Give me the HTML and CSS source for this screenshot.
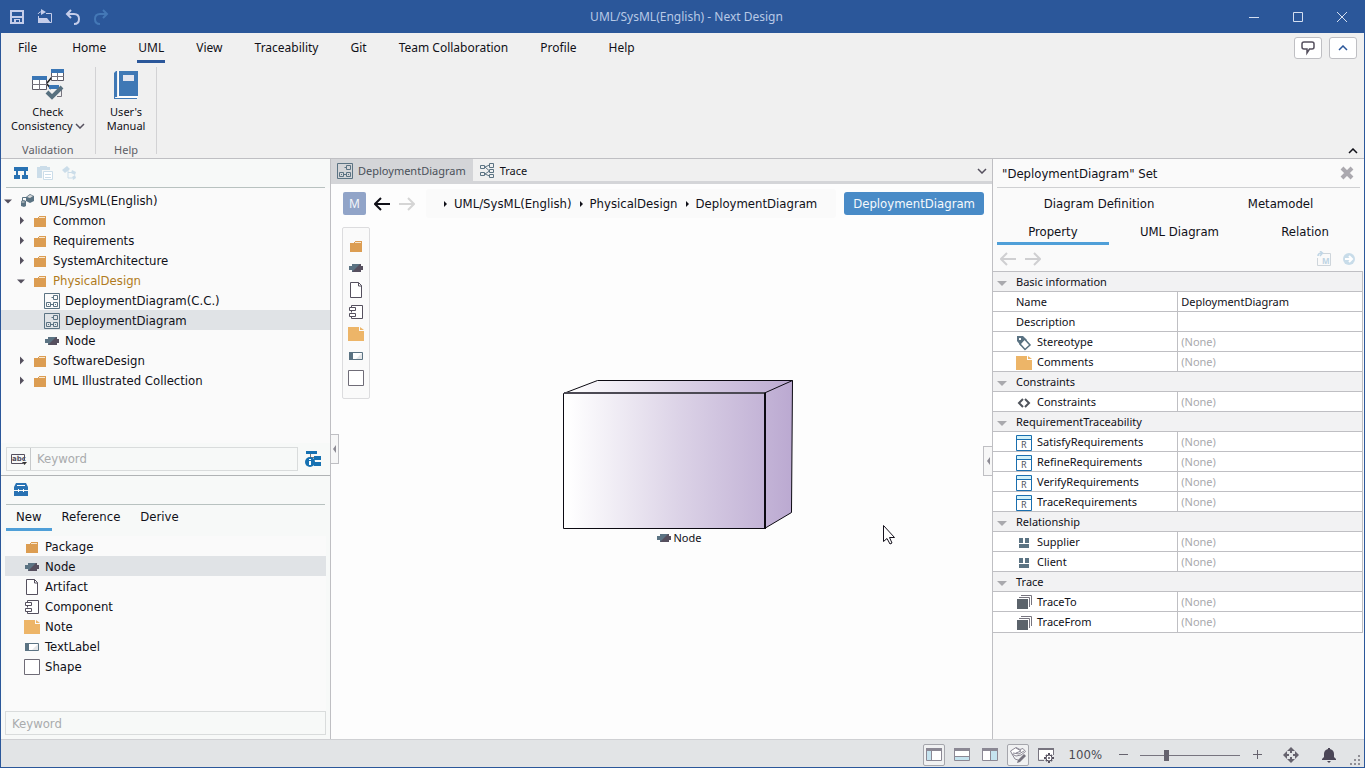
FILE: index.html
```
<!DOCTYPE html>
<html lang="en">

<head>
    <meta charset="UTF-8">
    <meta name="viewport" content="width=device-width, initial-scale=1.0">
    <title>UML/SysML(English) - Next Design</title>
    <link rel="stylesheet" href="styles.css">
</head>

<body>
    <!-- shared icons -->
    <svg class="sprite" aria-hidden="true">
        <symbol id="folder" viewBox="0 0 16 16">
            <path fill="#dc9d52" d="M2 5h12v9H2zM7 3h7v1H7zM13 3h1v3h-1zM6 4h1v1H6z" />
            <path fill="#f8e6cf" d="M7 4h6v1H7z" />
        </symbol>
        <symbol id="node" viewBox="0 0 16 16">
            <path fill="#5b7383" d="M1 6h3V4h9l-8 8H4v-2H1z" />
            <path fill="#564f5e" d="M12 4h1v2h2v4h-2v2H4z" />
        </symbol>
        <symbol id="file" viewBox="0 0 16 16">
            <path fill="#fff" stroke="#55505e" d="M2.500.5h8l3 3v12h-11z" />
            <path fill="none" stroke="#55505e" d="M10.500.5v3.500h3.500" />
        </symbol>
        <symbol id="component" viewBox="0 0 16 16">
            <path fill="#fff" stroke="#55505e" d="M3.500 3V1.500h11v13h-11V13M3.500 6.500v2" />
            <path fill="#fff" stroke="#55505e" d="M1.500 3.500h6v3h-6zM1.500 9.500h6v3h-6z" />
        </symbol>
        <symbol id="note" viewBox="0 0 16 16">
            <path fill="#edb568" d="M0 1h11v4h5v10H0zM12 1l4 3h-4z" />
        </symbol>
        <symbol id="label" viewBox="0 0 16 16">
            <path fill="#fff" stroke="#5b7383" d="M1.500 4.500h13v7h-13z" />
            <path fill="#5b7383" d="M1 4h4v8H1z" />
            <path fill="#e4e6e8" d="M14 5v6H8z" />
        </symbol>
        <symbol id="shape" viewBox="0 0 16 16">
            <path fill="#fff" stroke="#6f6c77" d="M.5.5h15v15H.5z" />
        </symbol>
        <symbol id="diagram" viewBox="0 0 16 16">
            <path fill="none" stroke="#5b7383" d="M.5.5h15v15H.5zM9.500 2.500h4v4h-4zM2.500 9.500h4v4h-4zM9.500 9.500h4v4h-4zM6.500 11.500h3M7.500 4.500h2" />
            <path fill="#5b7383" d="M4 11h1v1H4zM11 11h1v1h-1z" />
        </symbol>
        <symbol id="requirement" viewBox="0 0 16 16">
            <path fill="#fff" stroke="#1a6faf" d="M.5.5h15v15H.5z" />
            <path fill="#d3f1f8" d="M1 1h14v3H1z" />
            <path stroke="#1a6faf" d="M0 4.500h16" />
            <text x="5" y="13" font-family="Noto Sans, sans-serif" font-size="9" fill="#4f535b">R</text>
        </symbol>
        <symbol id="relation" viewBox="0 0 16 16">
            <path fill="#5b7383" d="M3 3h4v5H3zM9 3h4v5H9zM3 9h10v4H3z" />
        </symbol>
        <symbol id="stack" viewBox="0 0 16 16">
            <path fill="#5b636b" d="M1 4h11v10H1z" />
            <path fill="none" stroke="#77757f" d="M3 2.500h10.500V12M5 .5h10.500V10" />
        </symbol>
        <symbol id="left" viewBox="0 0 16 14">
            <path fill="none" stroke="currentColor" stroke-width="2" d="M16 7H1M7 1L1 7l6 6" />
        </symbol>
        <symbol id="right" viewBox="0 0 16 14">
            <path fill="none" stroke="currentColor" stroke-width="2" d="M0 7h15M9 1l6 6-6 6" />
        </symbol>
        <symbol id="up" viewBox="0 0 10 6">
            <path fill="none" stroke="currentColor" stroke-width="1.500" d="M1 5l4-4 4 4" />
        </symbol>
        <symbol id="down" viewBox="0 0 10 6">
            <path fill="none" stroke="currentColor" stroke-width="1.500" d="M1 1l4 4 4-4" />
        </symbol>
    </svg>

    <header class="titlebar">
        <div class="quick">
            <button aria-label="Save"><svg class="icon" viewBox="0 0 16 16"><path fill="none" stroke="#c5cdea" stroke-width="2" d="M2 2h12v12H2z" /><path fill="#c5cdea" d="M3 7h10v2H3zM5 11h2v3H5zM10 11h1v3h-1zM5 10h6v1H5z" /></svg></button>
            <button aria-label="Open"><svg class="icon" viewBox="0 0 16 16"><path fill="none" stroke="#c5cdea" d="M9 4.500h5.500v9h-13V7M1 5c1-2 3-2.500 6-2.500" stroke-width="1" /><path fill="#c5cdea" d="M4 0l5 3-5 3zM1 9h9l4 5H1z" /></svg></button>
            <button aria-label="Undo"><svg class="icon" viewBox="0 0 16 16"><path fill="none" stroke="#c5cdea" stroke-width="2" d="M6 1L2 5l4 4M2 5h7q5 0 5 5t-5 5" /></svg></button>
            <button aria-label="Redo"><svg class="icon" viewBox="0 0 16 16"><path fill="none" stroke="#4478b6" stroke-width="2" d="M10 1l4 4-4 4M14 5H7q-5 0-5 5t5 5" /></svg></button>
        </div>
        <h1>UML/SysML(English) - Next Design</h1>
        <div class="window-buttons">
            <button aria-label="Minimize"><svg viewBox="0 0 12 12"><path d="M1 6.500h10" /></svg></button>
            <button aria-label="Maximize"><svg viewBox="0 0 12 12"><path d="M1.500 1.500h9v9h-9z" /></svg></button>
            <button aria-label="Close"><svg viewBox="0 0 12 12"><path d="M1 1l10 10M11 1L1 11" /></svg></button>
        </div>
    </header>

    <div class="ribbon">
        <div class="ribbon-top">
            <nav class="ribbon-tabs">
                <button class="file">File</button>
                <button>Home</button>
                <button class="active">UML</button>
                <button>View</button>
                <button>Traceability</button>
                <button>Git</button>
                <button>Team Collaboration</button>
                <button>Profile</button>
                <button>Help</button>
            </nav>
            <div class="ribbon-extra">
                <button aria-label="Feedback"><svg class="icon" viewBox="0 0 16 16"><path fill="none" stroke="#55505e" stroke-width="1.500" d="M4 2h8q2 0 2 2v3q0 2-2 2H9.500L7 13V9H4Q2 9 2 7V4q0-2 2-2z" /></svg></button>
                <button aria-label="Collapse"><svg class="chevron blue"><use href="#up" /></svg></button>
            </div>
        </div>
        <div class="ribbon-groups">
            <section class="group">
                <button>
                    <svg class="big-icon" viewBox="0 0 32 32">
                        <path stroke="#222" stroke-width="1.500" d="M15 14l5-6M15 15l4 5" />
                        <path fill="#fff" stroke="#5d5a66" d="M.5 7.500h14v13H.5zM19.500.5h12v11h-12z" />
                        <path fill="#3a76b5" d="M0 7h15v4H0zM19 0h13v4H19zM17 16h10v4H17z" />
                        <path fill="none" stroke="#77757f" d="M0 15.500h15M7.500 11v10M19 7.500h13M25.500 4v8M29.500 21v6.500H25" />
                        <path fill="none" stroke="#57707f" stroke-width="4" d="M15 23l5 5 10-10" />
                    </svg>
                    <span>Check</span>
                    <span>Consistency<svg class="chevron small"><use href="#down" /></svg></span>
                </button>
                <h2>Validation</h2>
            </section>
            <section class="group">
                <button>
                    <svg class="big-icon" viewBox="0 0 32 32">
                        <path fill="#3f78b5" d="M4 4l2-2h1v26H5v2H4zM9 2h19v25H9zM5 29h22v1H5z" />
                        <path fill="#e3e5ef" d="M13 6h11v6H13z" />
                        <path fill="#fff" d="M8 2h1v25h19v1l-1 1H6v-1h2z" />
                    </svg>
                    <span>User's</span>
                    <span>Manual</span>
                </button>
                <h2>Help</h2>
            </section>
            <button class="minimize" aria-label="Minimize ribbon"><svg class="chevron"><use href="#up" /></svg></button>
        </div>
    </div>

    <main>
        <aside class="navigator">
            <div class="tools">
                <button aria-label="Model"><svg class="icon" viewBox="0 0 16 16"><path fill="#2872b3" d="M1 2h14v4H1zM1 10h6v4H1zM9 10h6v4H9zM3 6h2v4H3zM11 6h2v4h-2z" /></svg></button>
                <button aria-label="Documents"><svg class="icon" viewBox="0 0 16 16"><path fill="#cbdde9" d="M0 2h3V1h7v1h3v3H5v8H0z" /><path fill="#fff" stroke="#cbdde9" d="M6.500 6.500h9v8h-9zM8 9.500h6M8 12.500h6" /></svg></button>
                <button aria-label="Relations"><svg class="icon" viewBox="0 0 16 16"><path fill="#cbdde9" d="M1 5l5-4 3 3-5 4zM11 5l4 2-1 3-4-2zM11 12l3-2 1 3-3 2z" /><path fill="none" stroke="#cbdde9" d="M7 5v8h4M7 7.500h4" /></svg></button>
            </div>
            <ul class="tree">
                <li class="root"><span class="arrow open"></span><svg class="icon" viewBox="0 0 16 16"><path fill="#5b7383" d="M7 4l4-3 4 2v5l-4 2-4-2zM2 8l3-1 2 1v5l-2 1-3-1z" /><path fill="#ddd" d="M8 4l3-2 3 1-3 2zM2.500 8.500h3v1h-3z" /><path fill="none" stroke="#5b7383" d="M3.500 8V4.500H7" /></svg>UML/SysML(English)</li>
                <li><span class="arrow"></span><svg class="icon"><use href="#folder" /></svg>Common</li>
                <li><span class="arrow"></span><svg class="icon"><use href="#folder" /></svg>Requirements</li>
                <li><span class="arrow"></span><svg class="icon"><use href="#folder" /></svg>SystemArchitecture</li>
                <li class="current"><span class="arrow open"></span><svg class="icon"><use href="#folder" /></svg>PhysicalDesign</li>
                <li class="leaf"><svg class="icon"><use href="#diagram" /></svg>DeploymentDiagram(C.C.)</li>
                <li class="leaf selected"><svg class="icon"><use href="#diagram" /></svg>DeploymentDiagram</li>
                <li class="leaf"><svg class="icon"><use href="#node" /></svg>Node</li>
                <li><span class="arrow"></span><svg class="icon"><use href="#folder" /></svg>SoftwareDesign</li>
                <li><span class="arrow"></span><svg class="icon"><use href="#folder" /></svg>UML Illustrated Collection</li>
            </ul>
            <div class="search-row">
                <div class="search">
                    <button aria-label="Search by name"><svg class="icon" viewBox="0 0 16 16"><path fill="none" stroke="#55505e" d="M13.500 9V3.500H.5v9H12" /><text x="1" y="10" font-family="DejaVu Sans, sans-serif" font-size="7" font-weight="bold" fill="#55505e">abc</text><path fill="#333" d="M11 11h5l-2.500 3z" /></svg></button>
                    <input type="text" placeholder="Keyword" aria-label="Search model">
                </div>
                <button aria-label="Search details"><svg class="icon" viewBox="0 0 16 16"><path fill="#1671b2" d="M1 0h11v3H1zM9 5h7v4H9zM9 11h7v4H9z" /><path fill="none" stroke="#777" d="M5.500 3v3M5 6.500h4" /><circle cx="5" cy="11" r="5" fill="#1671b2" /><path fill="#fff" d="M4 8h2v1H4zM4 10h2v4H4z" /></svg></button>
            </div>

            <section class="toolbox">
                <div class="tools">
                    <button aria-label="Toolbox"><svg class="icon" viewBox="0 0 16 16"><path fill="#2872b3" d="M3 1h10l2 4v3H1V5zM1 9h14v5H1z" /><path fill="none" stroke="#fff" d="M4 3.500h8M5.500 7v3M10.500 7v3" /></svg></button>
                </div>
                <div class="toolbox-tabs">
                    <button class="active">New</button>
                    <button>Reference</button>
                    <button>Derive</button>
                </div>
                <ul class="types">
                    <li><svg class="icon"><use href="#folder" /></svg>Package</li>
                    <li class="selected"><svg class="icon"><use href="#node" /></svg>Node</li>
                    <li><svg class="icon"><use href="#file" /></svg>Artifact</li>
                    <li><svg class="icon"><use href="#component" /></svg>Component</li>
                    <li><svg class="icon"><use href="#note" /></svg>Note</li>
                    <li><svg class="icon"><use href="#label" /></svg>TextLabel</li>
                    <li><svg class="icon"><use href="#shape" /></svg>Shape</li>
                </ul>
                <input type="text" placeholder="Keyword" aria-label="Search types">
            </section>
        </aside>

        <section class="editor">
            <div class="editor-tabs">
                <button class="active"><svg class="icon"><use href="#diagram" /></svg>DeploymentDiagram</button>
                <button><svg class="icon" viewBox="0 0 16 16"><path fill="none" stroke="#5b7383" d="M1.500 2.500h4v3h-4zM1.500 9.500h4v3h-4zM10.500.5h4v4h-4zM10.500 6.500h4v3h-4zM10.500 11.500h4v3h-4zM6 4l4.500-2M6 4l4.500 4M6 11l4.500-3M6 11l4.500 2" /></svg>Trace</button>
                <button class="more" aria-label="More tabs"><svg class="chevron small"><use href="#down" /></svg></button>
            </div>
            <div class="path-row">
                <span class="model">M</span>
                <button aria-label="Back"><svg class="nav-arrow"><use href="#left" /></svg></button>
                <button class="off" aria-label="Forward"><svg class="nav-arrow"><use href="#right" /></svg></button>
                <nav class="path">
                    <a href="#">UML/SysML(English)</a>
                    <a href="#">PhysicalDesign</a>
                    <a href="#">DeploymentDiagram</a>
                </nav>
                <button class="view-name">DeploymentDiagram</button>
            </div>
            <div class="canvas">
                <div class="palette">
                    <button aria-label="Package"><svg class="icon"><use href="#folder" /></svg></button>
                    <button aria-label="Node"><svg class="icon"><use href="#node" /></svg></button>
                    <button aria-label="Artifact"><svg class="icon"><use href="#file" /></svg></button>
                    <button aria-label="Component"><svg class="icon"><use href="#component" /></svg></button>
                    <button aria-label="Note"><svg class="icon"><use href="#note" /></svg></button>
                    <button aria-label="TextLabel"><svg class="icon"><use href="#label" /></svg></button>
                    <button aria-label="Shape"><svg class="icon"><use href="#shape" /></svg></button>
                </div>
                <figure class="node">
                    <svg viewBox="0 0 231 150">
                        <defs>
                            <linearGradient id="face" gradientUnits="userSpaceOnUse" x1="0" y1="0" x2="230" y2="0">
                                <stop offset="0.020" stop-color="#fff" />
                                <stop offset="0.200" stop-color="#f2eff6" />
                                <stop offset="0.500" stop-color="#dcd3e7" />
                                <stop offset="1" stop-color="#bba9d1" />
                            </linearGradient>
                        </defs>
                        <path fill="url(#face)" stroke="#0c0a12" d="M.5 13.500L34.500.5h195l-1 132-27 16H.5z" />
                        <path fill="none" stroke="#4c4a54" stroke-width="2" d="M1 13h201" />
                        <path fill="none" stroke="#0c0a12" d="M201.500 13L229.500.5" />
                        <path stroke="#0c0a12" stroke-width="2" d="M202 13v136" />
                    </svg>
                    <figcaption><svg class="icon"><use href="#node" /></svg>Node</figcaption>
                </figure>
                <svg class="cursor" viewBox="0 0 12 20"><path fill="#fff" stroke="#14111c" d="M.5.5v16l3.500-3 3 5.500 2-1-2.500-5.500h5z" /></svg>
            </div>
            <button class="handle handle-left" aria-label="Hide navigator"></button>
            <button class="handle handle-right" aria-label="Hide inspector"></button>
        </section>

        <aside class="inspector">
            <div class="inspector-title">
                <h2>"DeploymentDiagram" Set</h2>
                <button aria-label="Close"><svg class="icon" viewBox="0 0 16 16"><path stroke="#aba9af" stroke-width="4" d="M3 3l10 10M13 3L3 13" /></svg></button>
            </div>
            <div class="inspector-tabs">
                <button>Diagram Definition</button>
                <button>Metamodel</button>
            </div>
            <div class="inspector-tabs">
                <button class="active">Property</button>
                <button>UML Diagram</button>
                <button>Relation</button>
            </div>
            <div class="inspector-nav">
                <button aria-label="Back"><svg class="nav-arrow"><use href="#left" /></svg></button>
                <button aria-label="Forward"><svg class="nav-arrow"><use href="#right" /></svg></button>
                <button class="open-model" aria-label="Open metamodel"><svg class="icon" viewBox="0 0 16 16"><path fill="none" stroke="#ced5db" d="M7 2.500h7.500v12h-13V7" /><path fill="none" stroke="#c0d6e6" stroke-width="1.500" d="M2 5q0-3 4-3M4 0l2.500 2L4 5" /><text x="6" y="13" font-family="Noto Sans, sans-serif" font-size="8" font-weight="bold" fill="#bdd3e3">M</text></svg></button>
                <button aria-label="Go"><svg class="icon" viewBox="0 0 16 16"><circle cx="8" cy="8" r="6" fill="#c8dce9" /><path fill="none" stroke="#fff" stroke-width="2" d="M4 8h7M8 5l3 3-3 3" /></svg></button>
            </div>
            <table class="properties">
                <tr class="section"><th colspan="2"><span class="toggle"></span>Basic information</th></tr>
                <tr><th>Name</th><td class="value">DeploymentDiagram</td></tr>
                <tr><th>Description</th><td></td></tr>
                <tr><th><svg class="icon" viewBox="0 0 16 16"><path fill="#5b7383" d="M1 1h6l4 4-6 6-4-5z" /><path fill="#fff" stroke="#57707f" stroke-width="1.500" d="M8.500 4l5.500 6-5 4.500-5-5.500z" /><path fill="#fff" d="M3 3h2v2H3z" /></svg>Stereotype</th><td>(None)</td></tr>
                <tr><th><svg class="icon"><use href="#note" /></svg>Comments</th><td>(None)</td></tr>
                <tr class="section"><th colspan="2"><span class="toggle"></span>Constraints</th></tr>
                <tr><th><svg class="icon" viewBox="0 0 16 16"><path fill="none" stroke="#4f535b" stroke-width="2" d="M7 4L3 8l4 4M9 4l4 4-4 4" /></svg>Constraints</th><td>(None)</td></tr>
                <tr class="section"><th colspan="2"><span class="toggle"></span>RequirementTraceability</th></tr>
                <tr><th><svg class="icon"><use href="#requirement" /></svg>SatisfyRequirements</th><td>(None)</td></tr>
                <tr><th><svg class="icon"><use href="#requirement" /></svg>RefineRequirements</th><td>(None)</td></tr>
                <tr><th><svg class="icon"><use href="#requirement" /></svg>VerifyRequirements</th><td>(None)</td></tr>
                <tr><th><svg class="icon"><use href="#requirement" /></svg>TraceRequirements</th><td>(None)</td></tr>
                <tr class="section"><th colspan="2"><span class="toggle"></span>Relationship</th></tr>
                <tr><th><svg class="icon"><use href="#relation" /></svg>Supplier</th><td>(None)</td></tr>
                <tr><th><svg class="icon"><use href="#relation" /></svg>Client</th><td>(None)</td></tr>
                <tr class="section"><th colspan="2"><span class="toggle"></span>Trace</th></tr>
                <tr><th><svg class="icon"><use href="#stack" /></svg>TraceTo</th><td>(None)</td></tr>
                <tr><th><svg class="icon"><use href="#stack" /></svg>TraceFrom</th><td>(None)</td></tr>
            </table>
        </aside>
    </main>

    <footer class="statusbar">
        <div class="view-buttons">
            <button class="on" aria-label="Navigator"><svg class="icon" viewBox="0 0 16 16"><path fill="#fff" stroke="#8b8894" d="M.5 1.500h15v12H.5z" /><path fill="#c5e3ef" d="M1 4h4v9H1z" /><path fill="#8b8894" d="M0 1h16v3H0zM5 4h1v9H5z" /></svg></button>
            <button aria-label="Bottom pane"><svg class="icon" viewBox="0 0 16 16"><path fill="#fff" stroke="#8b8894" d="M.5 1.500h15v12H.5z" /><path fill="#c5e3ef" d="M1 10h14v3H1z" /><path fill="#8b8894" d="M0 1h16v3H0zM1 9h14v1H1z" /></svg></button>
            <button aria-label="Inspector"><svg class="icon" viewBox="0 0 16 16"><path fill="#fff" stroke="#8b8894" d="M.5 1.500h15v12H.5z" /><path fill="#c5e3ef" d="M8 4h7v9H8z" /><path fill="#8b8894" d="M0 1h16v3H0zM8 4h1v9H8z" /></svg></button>
            <button class="on" aria-label="Edit mode"><svg class="icon" viewBox="0 0 16 16"><path fill="#fff" stroke="#8b8894" d="M.5 4L6 .5l4 2 3-1 2.500 3L11 8l-5 1-4-2zM3 6l6 1 5-3M2 7l3 5 3 1M6 1l5 3-5 2" /><path fill="#77747f" d="M14 7l2 2-6 6-3 1 1-3z" /></svg></button>
            <button aria-label="View settings"><svg class="icon" viewBox="0 0 16 16"><path fill="#fff" d="M1 2h14v10H1z" /><path fill="none" stroke="#77747f" d="M6 13.500H.5v-12h15V8" /><path fill="#77747f" d="M0 1h16v2H0z" /><path stroke="#55505e" stroke-width="2" d="M11 6v10M6 11h10M8 8l6 6M14 8l-6 6" /><circle cx="11" cy="11" r="3" fill="#fff" stroke="#55505e" /><circle cx="11" cy="11" r="1" fill="#55505e" /></svg></button>
        </div>
        <span class="zoom-value">100%</span>
        <button aria-label="Zoom out"><svg class="icon" viewBox="0 0 16 16"><path stroke="#66636e" d="M4 7.500h9" /></svg></button>
        <input type="range" min="0" max="100" value="25" aria-label="Zoom">
        <button aria-label="Zoom in"><svg class="icon" viewBox="0 0 16 16"><path stroke="#66636e" d="M4 7.500h9M8.500 3v9" /></svg></button>
        <button class="fit" aria-label="Fit"><svg class="icon" viewBox="0 0 16 16"><path fill="#66636e" d="M8 0l4 4H9v2H7V4H4zM8 16l4-4H9v-2H7v2H4zM0 8l4-4v3h2v2H4v3zM16 8l-4-4v3h-2v2h2v3z" /></svg></button>
        <button class="bell" aria-label="Notifications"><svg class="icon" viewBox="0 0 16 16"><path fill="#4b4657" d="M7 1h2v1q4 1 4 5v3l2 2v1H1v-1l2-2V7q0-4 4-5zM6 14h4l-2 2z" /></svg></button>
        <svg class="grip" viewBox="0 0 12 12"><path fill="#8f8e95" d="M8 0h2v2H8zM4 4h2v2H4zM8 4h2v2H8zM0 8h2v2H0zM4 8h2v2H4zM8 8h2v2H8z" /></svg>
    </footer>
</body>

</html>
```
FILE: styles.css
```
* {
    box-sizing: border-box;
}

body {
    display: flex;
    flex-direction: column;
    height: 100vh;
    min-height: 700px;
    margin: 0;
    border: 1px solid #2b579a;
    border-top: none;
    background-color: #fdfdfd;
    color: #101018;
    font-family: 'DejaVu Sans Condensed', 'DejaVu Sans', sans-serif;
    font-size: 13px;
    line-height: 20px;
}

button {
    display: flex;
    align-items: center;
    justify-content: center;
    padding: 0;
    border: none;
    background: none;
    color: inherit;
    font: inherit;
    white-space: nowrap;
}

input {
    min-width: 0;
    font: inherit;
}

h1,
h2,
ul,
figure {
    margin: 0;
    padding: 0;
    font-size: inherit;
    font-weight: normal;
    list-style: none;
}

svg {
    display: block;
    flex: none;
}

.sprite {
    display: none;
}

.icon {
    width: 16px;
    height: 16px;
}

.chevron {
    width: 10px;
    height: 6px;
}

.chevron.small {
    color: #55505e;
}

.chevron.blue {
    color: #2b579a;
}

.nav-arrow {
    width: 16px;
    height: 14px;
}

/* title bar */
.titlebar {
    display: flex;
    flex: none;
    align-items: center;
    height: 33px;
    padding-top: 1px;
    background-color: #2b579a;
    color: #b8c9e6;
    font-family: 'Noto Sans', sans-serif;
    font-size: 12px;
}

.quick,
.window-buttons {
    display: flex;
    flex: 1;
}

.quick {
    gap: 12px;
    padding-left: 8px;
}

.window-buttons {
    justify-content: flex-end;
}

.window-buttons button {
    width: 44px;
    height: 32px;
}

.window-buttons svg {
    width: 12px;
    height: 12px;
    fill: none;
    stroke: #d5dff0;
}

/* ribbon */
.ribbon {
    flex: none;
    border-bottom: 1px solid #bfbfc3;
    background-color: #f0f0f0;
    font-family: 'Noto Sans', sans-serif;
    font-size: 12px;
}

.ribbon-top {
    display: flex;
    justify-content: space-between;
    height: 32px;
    padding: 0 7px 0 16px;
}

.ribbon-tabs {
    display: flex;
    gap: 30px;
}

.ribbon-tabs button {
    height: 30px;
    padding: 0 1px;
    border-bottom: 3px solid transparent;
    border-top: 3px solid transparent;
}

.ribbon-tabs .file {
    margin-right: 3px;
}

.ribbon-tabs .active {
    border-bottom-color: #2b579a;
}

.ribbon-extra {
    display: flex;
    gap: 7px;
    padding-top: 4px;
}

.ribbon-extra button {
    width: 28px;
    height: 22px;
    border: 1px solid #bfbfc3;
    border-radius: 3px;
    background-color: #fff;
}

.ribbon-groups {
    display: flex;
    height: 93px;
    padding: 2px 6px 4px 0;
}

.group {
    display: flex;
    flex-direction: column;
    align-items: center;
    justify-content: space-between;
    padding: 2px 10px 0;
    border-right: 1px solid #d2d2d4;
    font-size: 11px;
}

.group + .group {
    padding: 2px 11px 0;
}

.group button {
    flex-direction: column;
    line-height: 14px;
}

.group button span {
    display: flex;
    gap: 2px;
    align-items: center;
}

.group h2 {
    color: #5e5e66;
    line-height: 8px;
}

.big-icon {
    width: 32px;
    height: 32px;
    margin-bottom: 4px;
}

.minimize {
    align-self: flex-end;
    margin-left: auto;
}

/* navigator */
main {
    display: flex;
    flex: 1;
    min-height: 0;
}

.navigator {
    display: flex;
    flex: none;
    flex-direction: column;
    width: 330px;
    border-right: 1px solid #bfbfc3;
    background-color: #f7f9f8;
}

.tools {
    display: flex;
    gap: 8px;
    height: 29px;
    margin: 0 5px;
    padding-left: 7px;
    border-bottom: 1px solid #b8c2c0;
}

.tree {
    flex: 1;
    padding-top: 2px;
    background-color: #fafafa;
}

.tree li {
    display: flex;
    gap: 5px;
    align-items: center;
    height: 20px;
    padding: 1px 0 0 16px;
}

.tree .root {
    padding-left: 3px;
}

.tree .leaf {
    padding-left: 43px;
}

.tree .current {
    color: #b07a20;
}

.tree .selected,
.types .selected {
    background-color: #e0e3e6;
}

.arrow {
    width: 10px;
    height: 10px;
    background-color: #55505e;
    clip-path: polygon(30% 10%, 70% 50%, 30% 90%);
}

.arrow.open {
    clip-path: polygon(0 40%, 80% 40%, 40% 80%);
}

.search-row {
    display: flex;
    gap: 7px;
    padding: 4px 9px 4px 5px;
}

.search {
    display: flex;
    flex: 1;
    height: 24px;
    border: 1px solid #d9dcdc;
}

.search button {
    width: 24px;
    border-right: 1px solid #c7cacb;
}

.search input {
    flex: 1;
    padding: 0 6px;
    border: none;
    background: none;
}

::placeholder {
    color: #a9abad;
}

.toolbox {
    display: flex;
    flex-direction: column;
    height: 264px;
    border-top: 1px solid #b0b3b5;
}

.toolbox-tabs {
    display: flex;
    gap: 18px;
    height: 26px;
    margin: 0 5px 5px;
}

.toolbox-tabs button {
    padding: 0 1px;
    border-bottom: 3px solid transparent;
}

.toolbox-tabs .active {
    padding: 0 10px;
    margin-right: -9px;
    border-bottom-color: #4f9fd8;
}

.types {
    flex: 1;
    margin: 0 4px;
    background-color: #fafafa;
}

.types li {
    display: flex;
    gap: 5px;
    align-items: center;
    height: 20px;
    padding: 1px 0 0 19px;
}

.toolbox input {
    height: 24px;
    margin: 0 4px 4px;
    padding: 0 6px;
    border: 1px solid #d9dcdc;
    background: none;
}

/* editor */
.editor {
    display: flex;
    flex: 1;
    flex-direction: column;
    position: relative;
    min-width: 0;
}

.editor-tabs {
    display: flex;
    height: 25px;
    border-bottom: 3px solid #d4d5d8;
    background-color: #f0f0f0;
    font-family: 'Noto Sans', sans-serif;
    font-size: 11px;
}

.editor-tabs button {
    gap: 5px;
    padding: 2px 6px 0;
}

.editor-tabs .active {
    padding-right: 7px;
    background-color: #d4d5d8;
    color: #4a5058;
}

.editor-tabs .more {
    padding-right: 5px;
    margin-left: auto;
}

.path-row {
    display: flex;
    align-items: center;
    padding: 5px 8px 0 12px;
}

.model {
    width: 23px;
    margin-right: 8px;
    border-radius: 2px;
    background-color: #91a4c8;
    color: #f4f6fa;
    font: 12px/23px 'Noto Sans', sans-serif;
    text-align: center;
}

.path-row .off {
    margin-left: 9px;
    color: #d5d5d5;
}

.path {
    display: flex;
    flex: 1;
    min-width: 0;
    height: 29px;
    margin: 0 8px 0 11px;
    padding-left: 16px;
    border-radius: 3px;
    background-color: #fafafa;
    line-height: 29px;
}

.path a {
    display: flex;
    gap: 7px;
    align-items: center;
    margin-right: 6px;
    color: inherit;
    text-decoration: none;
}

.path a::before {
    content: '';
    border: 3px solid transparent;
    border-right-width: 0;
    border-left-color: #101018;
    margin-left: 2px;
}

.view-name {
    height: 23px;
    padding: 0 9px;
    border-radius: 3px;
    background-color: #498bc7;
    color: #f6f9fc;
}

.canvas {
    position: relative;
    flex: 1;
}

.palette {
    display: flex;
    flex-direction: column;
    gap: 6px;
    width: 28px;
    margin: 9px 11px;
    padding: 10px 0 12px;
    border: 1px solid #dcdcde;
    border-radius: 2px;
    background-color: #fafafa;
}

.node {
    position: absolute;
    top: 162px;
    left: 232px;
    width: 231px;
    font-family: 'Noto Sans', sans-serif;
    font-size: 11px;
}

.node figcaption {
    display: flex;
    gap: 2px;
    justify-content: center;
    align-items: center;
    line-height: 16px;
}

.cursor {
    position: absolute;
    top: 307px;
    left: 552px;
    width: 12px;
    height: 20px;
}

.handle {
    position: absolute;
    top: 275px;
    left: 0;
    width: 8px;
    height: 30px;
    border: 1px solid #bfbfc3;
    border-left: none;
    background-color: #f7f7f7;
}

.handle-right {
    top: 287px;
    right: 0;
    left: auto;
    width: 9px;
    border: 1px solid #bfbfc3;
    border-right: none;
}

.handle::before {
    content: '';
    border: 4px solid transparent;
    border-left-width: 0;
    border-right: 3px solid #8d8b94;
}

/* inspector */
.inspector {
    flex: none;
    width: 372px;
    border-left: 1px solid #bfbfc3;
    background-color: #fafafa;
}

.inspector-title,
.inspector-tabs,
.inspector-nav {
    display: flex;
    margin: 0 4px;
}

.inspector-title {
    justify-content: space-between;
    height: 29px;
    padding: 0 5px;
    border-bottom: 1px solid #cfd0d2;
    line-height: 30px;
}

.inspector-tabs {
    height: 29px;
}

.inspector-tabs button {
    flex: 1 1 auto;
    padding-top: 5px;
    border-bottom: 3px solid transparent;
}

.inspector-tabs + .inspector-tabs {
    height: 28px;
}

.inspector-tabs .active {
    border-bottom-color: #4f9fd8;
}

.inspector-nav {
    gap: 9px;
    height: 26px;
    padding: 2px 3px 0;
    color: #cfcfd1;
}

.open-model {
    margin-left: auto;
}

.properties {
    width: calc(100% - 1px);
    border-collapse: collapse;
    table-layout: fixed;
    background-color: #fff;
    font-family: 'Noto Sans', sans-serif;
    font-size: 11px;
    line-height: 19px;
}

.properties tr {
    border: 1px solid #bfbfc3;
    border-left: none;
}

.properties th,
.properties td {
    height: 20px;
    padding: 0 0 0 3px;
    font-weight: normal;
    text-align: left;
}

.properties th {
    padding-left: 23px;
}

.properties td {
    border-left: 1px solid #bfbfc3;
    color: #a9a9ad;
}

.properties .value {
    color: #101018;
}

.properties .icon {
    display: inline-block;
    margin-right: 5px;
    vertical-align: middle;
}

.section {
    background-color: #f2f2f3;
}

.properties .section th {
    padding-left: 4px;
}

.toggle {
    display: inline-block;
    margin-right: 9px;
    border: 5px solid transparent;
    border-top-color: #a9a9ad;
    border-bottom: none;
}

/* status bar */
.statusbar {
    display: flex;
    flex: none;
    align-items: center;
    justify-content: flex-end;
    height: 28px;
    padding: 3px 2px 0;
    border-top: 1px solid #cfd0d3;
    background-color: #e2e4e6;
    color: #4a4a52;
}

.view-buttons {
    display: flex;
    gap: 6px;
    margin-right: 12px;
}

.view-buttons button {
    width: 22px;
    height: 22px;
    border: 1px solid transparent;
    border-radius: 2px;
}

.view-buttons .on {
    border-color: #a5a6ac;
    background-color: #f0f1f2;
}

.zoom-value {
    margin-right: 13px;
}

.statusbar input {
    width: 100px;
    height: 16px;
    margin: 0 9px;
    appearance: none;
    background: linear-gradient(#77747f, #77747f) center / 100% 1px no-repeat;
}

.statusbar input::-webkit-slider-thumb {
    width: 5px;
    height: 11px;
    appearance: none;
    background-color: #66636e;
}

.fit {
    margin-left: 18px;
}

.bell {
    margin: 0 13px 0 22px;
}

.grip {
    align-self: flex-end;
    width: 12px;
    height: 12px;
}
```
